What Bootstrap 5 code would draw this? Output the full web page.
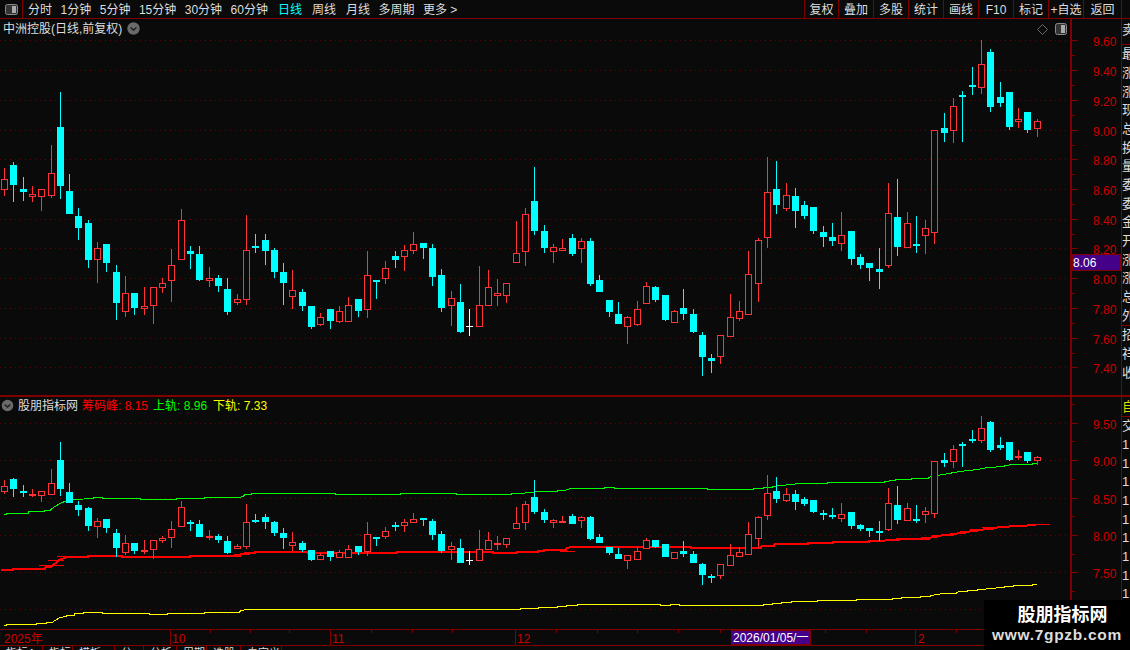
<!DOCTYPE html>
<html lang="zh">
<head>
<meta charset="utf-8">
<title>股朋指标网</title>
<link rel="stylesheet" href="https://cdn.jsdelivr.net/npm/bootstrap@5.3.0/dist/css/bootstrap.min.css">
<style>
html,body{background:#0a0a0a;margin:0;height:650px;overflow:hidden}
body,svg text{font-family:"Liberation Sans","Noto Sans CJK SC",sans-serif;font-size:12px;line-height:1;color:#dedede}
.app-frame{width:1130px;height:650px;position:relative;overflow:hidden}
.tool-bar{height:20px;border-bottom:1px solid #800000}
.tool-icon{width:23px;border-right:1px solid #800000}
.tool-left{gap:8.5px;padding-left:5px;padding-top:1px}
.tool-now{color:#00ffff}
.tool-pad{margin-left:1.5px}
.tool-right{margin-right:8px;border-right:1px solid #800000}
.tool-cell{width:35px;border-left:1px solid #800000;padding-top:1px}
.tool-cell-first{width:34px}
.tool-cell-wide{width:38px}
.row-upper{height:378px;border-bottom:2px solid #800000}
.row-lower{height:233px;border-bottom:1px solid #800000}
.plot-svg{width:1070px;height:100%;display:block;flex:none}
.scale-svg{width:52px;height:100%;display:block;flex:none;border-left:2px solid #800000;border-right:1px solid #800000}
.side-col{width:8px;flex:none;overflow:hidden;font-size:13px;white-space:nowrap}
.side-row{height:18.7px;line-height:18.7px}
.side-head{height:26px;line-height:22px;border-bottom:1px solid #800000}
.side-gap{border-bottom:1px solid #800000}
.side-auto{height:20px;line-height:20px;color:#d8d800;border-bottom:1px solid #800000}
.chart-title{top:3px;left:3px;gap:5px}
.legend-line{top:2px;left:1px;gap:4px}
.legend-mid{margin-right:1px}
.legend-next{margin-right:2px}
.tx-red{color:#ff0000}.tx-green{color:#00ff00}.tx-yellow{color:#ffff00}
.date-row{height:16px;border-bottom:1px solid #800000}
.date-svg{width:1122px;height:15px;display:block}
.tab-row{height:4px;overflow:hidden;line-height:14px;font-size:11px}
.tab-cell{border-right:1px solid #800000;padding-left:6px;white-space:nowrap;overflow:hidden}
.brand-box{right:0;bottom:0;width:146px;height:50px;background:#000;color:#eee;padding-top:4px}
.brand-name{font-size:18px;font-weight:700;line-height:22px;color:#fff;padding-left:11px}
.brand-url{font-size:15.5px;font-weight:700;line-height:18px;letter-spacing:.7px;color:#ddd}
</style>
</head>
<body>
<div class="app-frame d-flex flex-column">
  <div class="tool-bar d-flex flex-none">
    <div class="tool-icon d-flex align-items-center justify-content-center">
      <svg width="13" height="11" viewBox="0 0 13 11"><rect x=".5" y=".5" width="12" height="10" rx="2" fill="#333" stroke="#8a8a8a"/><rect x="7" y="2" width="4" height="7" fill="#aaa"/></svg>
    </div>
    <div class="tool-left d-flex align-items-center">
      <span>分时</span><span>1分钟</span><span>5分钟</span><span>15分钟</span><span>30分钟</span><span>60分钟</span>
      <span class="tool-now tool-pad">日线</span><span class="tool-pad">周线</span><span class="tool-pad">月线</span><span>多周期</span><span>更多 &gt;</span>
    </div>
    <div class="tool-right d-flex ms-auto">
      <div class="tool-cell tool-cell-first d-flex align-items-center justify-content-center">复权</div>
      <div class="tool-cell d-flex align-items-center justify-content-center">叠加</div>
      <div class="tool-cell d-flex align-items-center justify-content-center">多股</div>
      <div class="tool-cell d-flex align-items-center justify-content-center">统计</div>
      <div class="tool-cell d-flex align-items-center justify-content-center">画线</div>
      <div class="tool-cell d-flex align-items-center justify-content-center">F10</div>
      <div class="tool-cell d-flex align-items-center justify-content-center">标记</div>
      <div class="tool-cell d-flex align-items-center justify-content-center">+自选</div>
      <div class="tool-cell tool-cell-wide d-flex align-items-center justify-content-center">返回</div>
    </div>
  </div>

  <div class="row-upper d-flex position-relative">
    <svg id="plotUp" class="plot-svg" viewBox="0 20 1070 376"></svg>
    <svg id="scaleUp" class="scale-svg" viewBox="0 20 49 376"></svg>
    <div class="side-col">
      <div class="side-head">卖</div>
      <div class="side-gap">
        <div class="side-row">最</div><div class="side-row">涨</div><div class="side-row">涨</div><div class="side-row">现</div><div class="side-row">总</div>
        <div class="side-row">换</div><div class="side-row">量</div><div class="side-row">委</div><div class="side-row">委</div><div class="side-row">金</div>
        <div class="side-row">开</div><div class="side-row">涨</div><div class="side-row">涨</div><div class="side-row">总</div><div class="side-row">外</div>
      </div>
      <div class="side-row">招</div><div class="side-row">祥</div><div class="side-row">收</div>
    </div>
    <div class="chart-title position-absolute d-flex align-items-center">
      <span>中洲控股(日线,前复权)</span>
      <svg width="13" height="13" viewBox="0 0 13 13"><circle cx="6.5" cy="6.5" r="6.2" fill="#6a6a6a"/><path d="M3.5 5.5l3 2.6 3-2.6" fill="none" stroke="#1c1c1c" stroke-width="1.3"/></svg>
    </div>
    <svg class="position-absolute top-0" style="left:1036px" width="32" height="17" viewBox="0 0 32 17"><path d="M6.5 5.5l5 5-5 5-5-5z" fill="none" stroke="#666"/><rect x="19.5" y="4.5" width="11" height="11" rx="2" fill="#333" stroke="#8a8a8a"/><rect x="25" y="6" width="4" height="8" fill="#aaa"/></svg>
  </div>

  <div class="row-lower d-flex position-relative">
    <svg id="plotLow" class="plot-svg" viewBox="0 398 1070 232"></svg>
    <svg id="scaleLow" class="scale-svg" viewBox="0 398 49 232"></svg>
    <div class="side-col">
      <div class="side-auto">自</div>
      <div class="side-row">交</div>
      <div class="side-row">1</div><div class="side-row">1</div><div class="side-row">1</div><div class="side-row">1</div><div class="side-row">1</div><div class="side-row">1</div><div class="side-row">1</div><div class="side-row">1</div><div class="side-row">1</div><div class="side-row">1</div>
    </div>
    <div class="legend-line position-absolute d-flex align-items-center">
      <svg width="13" height="13" viewBox="0 0 13 13"><circle cx="6.5" cy="6.5" r="5.8" fill="#6a6a6a"/><path d="M3.7 5.5l2.8 2.6 2.8-2.6" fill="none" stroke="#1c1c1c" stroke-width="1.3"/></svg>
      <span>股朋指标网</span>
      <span class="tx-red legend-mid">筹码峰: 8.15</span>
      <span class="tx-green legend-next">上轨: 8.96</span>
      <span class="tx-yellow">下轨: 7.33</span>
    </div>
  </div>

  <div class="date-row">
    <svg class="date-svg" viewBox="0 631 1122 15">
      <g stroke="#800000" fill="none" shape-rendering="crispEdges">
        <path d="M170.5 631v15M330.5 631v15M515.5 631v15M915.5 631v15"/>
        <path d="M210.5 631v3M250.5 631v3M289.5 631v3M371.5 631v3M412.5 631v3M452.5 631v3M556.5 631v3M597.5 631v3M637.5 631v3M678.5 631v3M720.5 631v3M825.5 631v3M866.5 631v3M956.5 631v3"/>
        <path d="M1070.5 631v15M1121.5 631v15"/>
      </g>
      <g fill="#cc0000">
        <text x="4" y="644">2025年</text><text x="172" y="644">10</text><text x="332" y="644">11</text><text x="517" y="644">12</text><text x="918" y="644">2</text>
      </g>
      <rect x="731.5" y="631.5" width="79" height="14" fill="#440088" stroke="#800000" shape-rendering="crispEdges"/>
      <text x="733" y="643" fill="#fff">2026/01/05/一</text>
    </svg>
  </div>
  <div class="tab-row d-flex"></div>
  <div class="brand-box position-absolute text-center">
    <div class="brand-name">股朋指标网</div>
    <div class="brand-url">www.7gpzb.com</div>
  </div>
</div>

<script src="https://cdn.jsdelivr.net/npm/bootstrap@5.3.0/dist/js/bootstrap.bundle.min.js"></script>
<script>
var groups=[
 {x:0,y:80,d:[
 "r,13,267,301,331,350","c,40,250,258,317,368","c,70,294,330,339,365","r,97,321,346,352,368","r,124,331,331,352,395","r,154,198,283,349,356","c,181,39,144,320,359","c,208,285,336,404,404","c,235,388,411,446,482","c,265,424,432,542,566","r,292,489,508,541,611","c,319,495,495,551,578","c,349,558,579,671,722","r,376,591,643,697,713","c,403,642,642,686,707","r,433,625,682,688,707","r,460,625,625,679,734","r,487,598,613,625,641","r,514,511,559,604,668","r,544,390,424,541,541","c,571,502,516,525,569","c,598,502,525,602,605","r,628,565,598,604,623","c,655,589,597,620,638","c,682,598,630,698,707","r,712,646,661,670,677","r,739,408,514,661,677","c,766,465,501,507,521","c,796,465,483,515,557","c,823,507,513,578,596"]},
 {x:280,y:160,d:[
 "c,10,312,339,371,437","r,37,333,394,412,449","c,67,390,399,440,455","c,94,441,441,503,509","r,121,462,475,494,500","c,151,450,450,485,509","r,178,441,457,485,491","r,205,414,439,485,485","c,235,420,420,455,473","r,262,276,349,451,476","c,289,364,364,366,419","r,316,306,328,358,374","c,346,277,291,302,326","r,373,259,274,292,335","r,400,220,256,274,284","c,430,252,252,266,299","c,457,255,267,353,380","c,484,331,348,446,458","r,514,396,418,439,500","c,541,375,429,518,521","w,568,450,501,503,530","r,598,321,439,502,502","r,625,334,385,439,439","r,652,360,403,409,440","r,679,373,373,409,431","r,709,186,283,310,310","r,736,148,166,277,320","c,763,25,126,215,227","c,793,198,216,266,281","r,820,255,265,277,311"]},
 {x:560,y:150,d:[
 "r,7,270,298,304,304","c,37,255,267,315,320","r,64,267,277,296,341","c,91,267,276,404,410","c,118,378,393,428,428","c,148,453,453,488,503","c,175,459,495,524,524","r,202,502,505,532,584","r,232,456,481,526,530","r,259,400,412,463,463","c,286,411,414,453,458","c,316,438,438,512,515","r,343,484,487,518,521","c,370,420,477,494,512","c,400,480,495,548,551","c,427,549,558,623,680","c,454,615,627,635,671","r,481,558,558,620,644","r,511,435,505,560,560","r,538,457,487,508,515","r,565,306,376,496,496","r,595,267,274,403,458","r,622,25,130,265,296","c,649,36,120,167,194","r,679,102,139,176,185","c,706,117,141,185,236","c,733,156,168,200,209","c,760,174,174,245,254","c,790,232,249,263,293","c,817,222,264,275,290"]},
 {x:830,y:30,d:[
 "r,34,549,619,643,665","c,64,606,606,689,707","c,91,675,685,707,719","c,118,702,702,716,755","c,148,657,720,728,779","r,175,462,553,709,716","c,202,450,564,653,680","r,232,549,583,655,655","c,259,561,645,650,671","r,286,573,598,619,674","r,313,304,304,610,644","c,343,252,297,311,338","r,370,208,232,304,341","c,397,186,198,203,338","c,427,114,168,173,197","r,454,33,106,175,194","c,481,60,69,233,248","c,511,159,204,221,233","c,538,189,189,293,302","r,565,237,271,277,296","c,592,249,249,302,311","r,622,271,277,298,323"]}
];
var candles=[];
groups.forEach(function(g){g.d.forEach(function(s){var p=s.split(",");candles.push({t:p[0],x:g.x+Math.floor(+p[1]/3),h:g.y+ +p[2]/3,a:g.y+ +p[3]/3,b:g.y+ +p[4]/3,l:g.y+ +p[5]/3});});});
var BG="#0a0a0a",RED="#ff3333",CY="#00ffff";
function candleMarkup(mapY){
  var o="";
  candles.forEach(function(c){
    var h=Math.round(mapY(c.h)),a=Math.round(mapY(c.a)),b=Math.round(mapY(c.b)),l=Math.round(mapY(c.l));
    if(b<=a)b=a+1;
    if(c.t==="r"){
      if(a>h)o+='<rect x="'+c.x+'" y="'+h+'" width="1" height="'+(a-h)+'" fill="'+RED+'"/>';
      if(l>b)o+='<rect x="'+c.x+'" y="'+b+'" width="1" height="'+(l-b)+'" fill="'+RED+'"/>';
      o+='<rect x="'+(c.x-2.5)+'" y="'+(a+.5)+'" width="6" height="'+(b-a)+'" fill="'+BG+'" stroke="'+RED+'"/>';
    }else if(c.t==="w"){
      o+='<rect x="'+c.x+'" y="'+h+'" width="1" height="'+(l-h)+'" fill="#fff"/><rect x="'+(c.x-3)+'" y="'+a+'" width="7" height="1" fill="#fff"/>';
    }else{
      o+='<rect x="'+c.x+'" y="'+h+'" width="1" height="'+(l-h)+'" fill="'+CY+'"/><rect x="'+(c.x-3)+'" y="'+a+'" width="7" height="'+Math.max(b-a,2)+'" fill="'+CY+'"/>';
    }
  });
  return o;
}
function grid(ys){return ys.map(function(y){return '<path d="M0 '+(y+.5)+'H1070" stroke="#6a0000" stroke-dasharray="1 4" fill="none"/>';}).join("");}
function poly(a,x0,y0,fx,c,w){
  var pts=[];for(var i=0;i<a.length;i+=2){pts.push((x0+a[i]/fx).toFixed(1)+","+(Math.round(y0+a[i+1]/3)+.5));}
  return '<polyline points="'+pts.join(" ")+'" fill="none" stroke="'+c+'" stroke-width="'+w+'"/>';
}
function thin(x1,x2,y){return '<path d="M'+x1+' '+(y+.5)+'H'+x2+'" stroke="#ff0000"/>';}
document.getElementById("plotUp").innerHTML=grid([41,71,101,131,160,190,220,249,279,309,339,368])+'<g shape-rendering="crispEdges">'+candleMarkup(function(y){return y;})+'</g>';

var F=2.904;
var g1=[12,224,27,221,84,221,84,217,132,217,132,214,150,212,160,205,175,195,186,188,195,187,222,179,280,178,280,175,306,175,306,178,420,178,420,181,528,181,528,178,612,178,612,175,717,175,728,170,736,166,753,166,753,163,1005,163,1005,166,1200,166,1200,163,1368,163,1368,166,1533,166,1533,163,1560,163];
var g2=[0,253,30,250,55,247,110,247,110,244,130,244,145,238,244,238,244,235,273,235,273,238,543,238,543,241,677,241,677,238,706,238,706,235,733,235,733,232,758,229,787,226,813,223,893,223,893,220,1057,220,1057,217,1089,214,1089,211,1138,211,1138,208,1185,208,1185,205,1212,199,1245,193,1278,187,1327,181,1358,175,1408,172,1408,169,1434,166,1487,166,1487,163,1501,163];
var y1=[12,559,27,556,110,556,110,553,138,553,138,550,156,550,170,540,180,533,200,530,200,527,222,527,222,523,250,523,250,520,306,520,306,523,447,523,447,526,501,526,501,523,612,523,612,520,717,520,717,517,736,511,1560,511];
var y2=[0,600,3,598,55,598,55,595,110,595,110,592,136,592,136,589,166,589,166,586,409,586,409,589,436,589,436,586,462,586,462,589,706,589,706,586,732,586,732,583,758,583,758,580,787,580,787,577,865,577,865,574,976,574,976,571,1083,571,1083,568,1109,568,1109,565,1164,565,1164,562,1191,562,1191,559,1212,556,1226,553,1266,553,1266,550,1278,547,1298,547,1298,544,1327,544,1327,541,1347,541,1358,538,1408,535,1408,532,1434,532,1434,529,1487,529,1487,526,1501,526];
var r1=[3,390,40,390,40,387,135,387,135,384,155,382,165,373,180,360,190,356,207,351,265,351,265,348,366,348,366,351,570,351,570,348,720,348,720,345,745,339,765,339,765,336,925,336,925,338,1190,338,1190,336,1480,336,1480,338,1550,338,1550,336,1560,336];
var r2=[0,426,52,426,52,423,70,423,70,420,133,420,133,417,152,411,495,411,495,414,700,414,700,411,710,408,738,408,738,405,772,402,835,402,835,399,908,399,908,396,1013,396,1013,393,1060,393,1095,390,1095,387,1190,387,1197,380,1222,377,1260,374,1278,368,1305,365,1330,362,1358,358,1385,353,1420,350,1473,347,1500,345];
var lowerLines=
  poly(g1,0,440,3,"#00ff00",1)+poly(g2,520,410,F,"#00ff00",1)+
  poly(y1,0,440,3,"#ffff00",1)+poly(y2,520,410,F,"#ffff00",1)+
  poly(r1,0,440,3,"#ff0000",2)+poly(r2,520,410,F,"#ff0000",2)+
  thin(39,64,566)+thin(48,64,561)+thin(57,73,557)+thin(234,250,555)+
  thin(560,575,552)+thin(871,900,541)+thin(921,938,538)+thin(950,966,534)+thin(970,994,530)+thin(982,997,528)+
  '<path d="M1036 525.5H1050" stroke="#ff0000"/>';
document.getElementById("plotLow").innerHTML=grid([424,461,499,536,573,610])+'<g shape-rendering="crispEdges">'+lowerLines+candleMarkup(function(y){return 417+(y-41)*0.503;})+'</g>';

function scale(id,items,minor){
  var o='<g stroke="#800000" shape-rendering="crispEdges">';
  items.forEach(function(i){o+='<path d="M0 '+(i[0]+.5)+'H6"/>';});
  minor.forEach(function(y){o+='<path d="M0 '+(y+.5)+'H3"/>';});
  o+='</g><g fill="#cc0000">';
  items.forEach(function(i){if(i[1])o+='<text x="21" y="'+(i[0]+5.5)+'">'+i[1]+'</text>';});
  document.getElementById(id).innerHTML=o+'</g>';
}
var up=[[41,"9.60"],[71,"9.40"],[101,"9.20"],[131,"9.00"],[160,"8.80"],[190,"8.60"],[220,"8.40"],[249,"8.20"],[279,"8.00"],[309,"7.80"],[339,"7.60"],[368,"7.40"]];
var um=[];for(var i=0;i<up.length-1;i++)um.push(Math.round((up[i][0]+up[i+1][0])/2));
scale("scaleUp",up,um);
document.getElementById("scaleUp").insertAdjacentHTML("beforeend",'<rect x="0.5" y="255.5" width="48" height="16" fill="#440088" stroke="#800000" shape-rendering="crispEdges"/><text x="1" y="268" fill="#fff">8.06</text>');
scale("scaleLow",[[424,"9.50"],[461,"9.00"],[499,"8.50"],[536,"8.00"],[573,"7.50"],[610,""]],[405,442,480,517,555,592]);

var tabs=[[43,"指标A"],[30,"指标"],[42,"模板"],[29,"分"],[33,"分析"],[30,"周期"],[34,"选股"],[41,"自定义"]];
var tr=document.querySelector(".tab-row");
tabs.forEach(function(t){var d=document.createElement("div");d.className="tab-cell";d.style.width=t[0]+"px";d.textContent=t[1];tr.appendChild(d);});
</script>
</body>
</html>
